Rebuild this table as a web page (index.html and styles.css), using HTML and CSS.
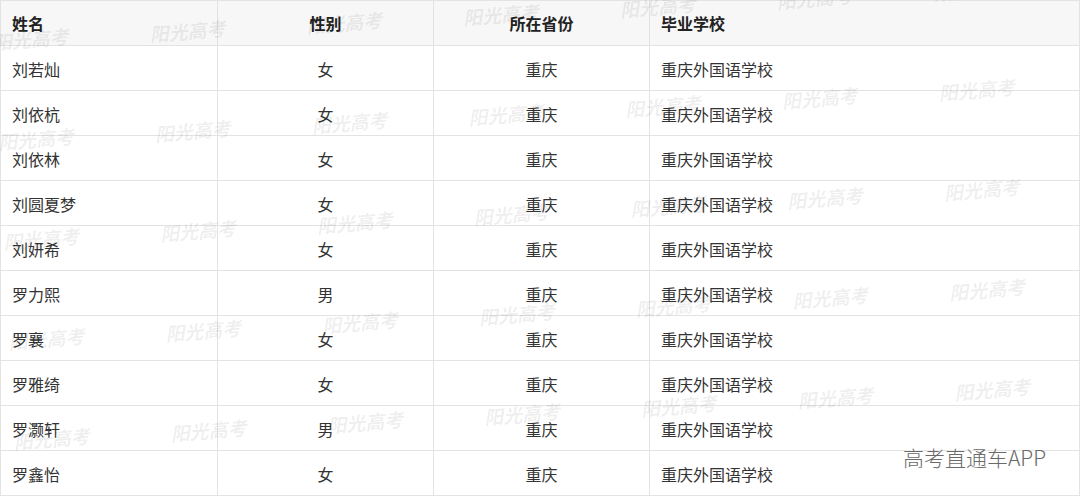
FILE: index.html
```html
<!DOCTYPE html>
<html lang="zh-CN">
<head>
<meta charset="utf-8">
<title>名单</title>
<link rel="stylesheet" href="styles.css">
</head>
<body>
<div class="page">
  <table class="roster">
    <colgroup>
      <col class="c-name"><col class="c-sex"><col class="c-prov"><col class="c-school">
    </colgroup>
    <thead>
      <tr><th class="left">姓名</th><th>性别</th><th>所在省份</th><th class="left">毕业学校</th></tr>
    </thead>
    <tbody>
      <tr><td class="left">刘若灿</td><td>女</td><td>重庆</td><td class="left">重庆外国语学校</td></tr>
      <tr><td class="left">刘依杭</td><td>女</td><td>重庆</td><td class="left">重庆外国语学校</td></tr>
      <tr><td class="left">刘依林</td><td>女</td><td>重庆</td><td class="left">重庆外国语学校</td></tr>
      <tr><td class="left">刘圆夏梦</td><td>女</td><td>重庆</td><td class="left">重庆外国语学校</td></tr>
      <tr><td class="left">刘妍希</td><td>女</td><td>重庆</td><td class="left">重庆外国语学校</td></tr>
      <tr><td class="left">罗力熙</td><td>男</td><td>重庆</td><td class="left">重庆外国语学校</td></tr>
      <tr><td class="left">罗襄</td><td>女</td><td>重庆</td><td class="left">重庆外国语学校</td></tr>
      <tr><td class="left">罗雅绮</td><td>女</td><td>重庆</td><td class="left">重庆外国语学校</td></tr>
      <tr><td class="left">罗灏轩</td><td>男</td><td>重庆</td><td class="left">重庆外国语学校</td></tr>
      <tr><td class="left">罗鑫怡</td><td>女</td><td>重庆</td><td class="left">重庆外国语学校</td></tr>
    </tbody>
  </table>

  <div class="watermarks" aria-hidden="true">
    <span>阳光高考</span><span>阳光高考</span><span>阳光高考</span><span>阳光高考</span><span>阳光高考</span><span>阳光高考</span><span>阳光高考</span>
    <span>阳光高考</span><span>阳光高考</span><span>阳光高考</span><span>阳光高考</span><span>阳光高考</span><span>阳光高考</span><span>阳光高考</span>
    <span>阳光高考</span><span>阳光高考</span><span>阳光高考</span><span>阳光高考</span><span>阳光高考</span><span>阳光高考</span><span>阳光高考</span>
    <span>阳光高考</span><span>阳光高考</span><span>阳光高考</span><span>阳光高考</span><span>阳光高考</span><span>阳光高考</span><span>阳光高考</span>
    <span>阳光高考</span><span>阳光高考</span><span>阳光高考</span><span>阳光高考</span><span>阳光高考</span><span>阳光高考</span><span>阳光高考</span>
  </div>

  <div class="brand">高考直通车APP</div>
</div>
</body>
</html>
```

FILE: styles.css
```css
html, body {
  margin: 0;
  padding: 0;
  background: #ffffff;
}

body {
  font-family: "Noto Sans CJK SC", "Noto Sans", sans-serif;
  color: #333333;
  overflow: hidden;
}

.page {
  position: relative;
  width: 1080px;
  height: 497px;
  overflow: hidden;
}

.roster {
  border-collapse: collapse;
  table-layout: fixed;
  width: 1079px;
  font-size: 16px;
}

.c-name { width: 217px; }
.c-sex { width: 216px; }
.c-prov { width: 216px; }
.c-school { width: 430px; }

.roster th,
.roster td {
  height: 45px;
  padding: 0 11px;
  border: 1px solid #e3e3e3;
  text-align: center;
  vertical-align: middle;
  line-height: 20px;
  box-sizing: border-box;
  white-space: nowrap;
}

.roster td {
  padding-top: 1px;
}

.roster th {
  background: #f7f7f7;
  font-weight: 700;
  color: #222222;
  padding-top: 0;
}

.roster .left {
  text-align: left;
}

.watermarks {
  position: absolute;
  left: -48px;
  top: -12px;
  display: grid;
  grid-template-columns: repeat(7, 157px);
  grid-auto-rows: 100px;
  transform-origin: 78px 50px;
  transform: rotate(-3deg);
  pointer-events: none;
}

.watermarks span {
  display: flex;
  align-items: center;
  justify-content: center;
  font-family: "Liberation Serif", "Noto Sans CJK SC", serif;
  font-style: italic;
  font-weight: 700;
  font-size: 19px;
  color: rgba(0, 0, 0, 0.075);
  transform: rotate(-2deg);
}

.brand {
  position: absolute;
  left: 903px;
  top: 443px;
  font-size: 21px;
  line-height: 28px;
  color: #6a6a6a;
  font-weight: 300;
  text-shadow: 0 0 3px #ffffff, 0 0 3px #ffffff;
}
```
